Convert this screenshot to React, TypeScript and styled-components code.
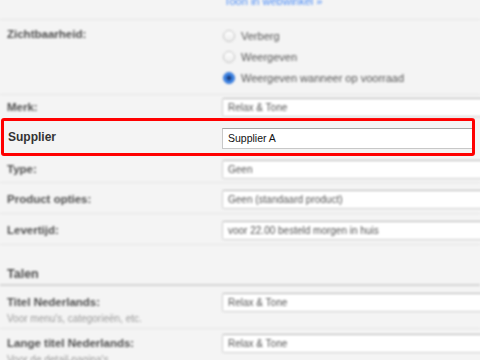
import styled, { createGlobalStyle } from 'styled-components';

const GlobalStyle = createGlobalStyle`
  html, body {
    margin: 0;
    padding: 0;
    background: #f4f4f4;
    overflow: hidden;
  }
  body {
    font-family: "Liberation Sans", Arial, sans-serif;
  }
`;

const Page = styled.main`
  width: 480px;
  height: 360px;
  overflow: hidden;
  background: #f4f4f4;
`;

const Blurred = styled.div`
  filter: blur(0.8px);
`;

const LinkRow = styled.div`
  display: flow-root;
  height: 19px;
  border-bottom: 1px solid #e6e6e6;
  padding-left: 224px;
`;

const ShopLink = styled.a`
  display: block;
  margin-top: -5px;
  font-size: 11px;
  line-height: 13px;
  color: #4d8df6;
  text-decoration: none;
`;

const Row = styled.div<{ $top: number; $bottom: number; $line?: boolean }>`
  display: flex;
  align-items: flex-start;
  padding: ${(p) => p.$top}px 0 ${(p) => p.$bottom}px 7px;
  border-bottom: ${(p) => (p.$line === false ? 'none' : '1px solid #e6e6e6')};
`;

const LabelCol = styled.div`
  width: 215px;
  flex-shrink: 0;
`;

const Label = styled.div`
  font-size: 11.5px;
  font-weight: bold;
  color: #4e4e4e;
  line-height: 19px;
`;

const Hint = styled.div`
  font-size: 10px;
  color: #9a9a9a;
  line-height: 13px;
`;

const Input = styled.div`
  box-sizing: border-box;
  flex: 1;
  min-width: 300px;
  height: 19px;
  background: #fff;
  border: 1px solid #cfcfcf;
  border-top-color: #b5b5b5;
  border-radius: 2px 0 0 2px;
  padding-left: 5px;
  font-size: 10px;
  line-height: 17px;
  color: #555;
  white-space: nowrap;
  margin-right: -40px;
`;

const RadioList = styled.div`
  display: flex;
  flex-direction: column;
  padding-left: 1px;
`;

const RadioItem = styled.label`
  display: flex;
  align-items: center;
  gap: 6px;
  height: 21px;
  font-size: 11px;
  color: #555;
`;

const RadioDot = styled.span<{ $checked?: boolean }>`
  box-sizing: border-box;
  width: 12px;
  height: 12px;
  border-radius: 50%;
  border: 1px solid ${(p) => (p.$checked ? '#2f6fd0' : '#c4c4c4')};
  background: ${(p) =>
    p.$checked
      ? 'radial-gradient(circle, #1c3f80 0 2px, #3d86e8 3px)'
      : 'linear-gradient(#fff, #ececec)'};
`;

const Highlight = styled.div`
  display: flex;
  align-items: center;
  width: 474px;
  height: 38px;
  box-sizing: border-box;
  margin-left: 1px;
  border: 3px solid #ff0000;
  border-radius: 3px;
  padding-left: 4px;
  overflow: hidden;
`;

const HighlightLabel = styled.div`
  width: 214px;
  flex-shrink: 0;
  font-size: 12px;
  font-weight: bold;
  color: #333;
  padding-bottom: 1px;
`;

const HighlightInput = styled.div`
  box-sizing: border-box;
  flex: 1;
  height: 21px;
  margin-top: 3px;
  background: #fff;
  border: 1px solid #c8c8c8;
  border-top-color: #a8a8a8;
  border-right: none;
  padding-left: 5px;
  font-size: 10.5px;
  line-height: 19px;
  color: #111;
`;

const Section = styled.div`
  padding: 22px 0 0 7px;
  border-bottom: 2px solid #d6d6d6;
  height: 17px;
`;

const SectionTitle = styled.h2`
  margin: 0;
  font-size: 12.5px;
  font-weight: bold;
  color: #4e4e4e;
  line-height: 14px;
`;

export default function App() {
  return (
    <Page>
      <GlobalStyle />
      <Blurred>
        <LinkRow>
          <ShopLink href="#">Toon in webwinkel »</ShopLink>
        </LinkRow>
        <Row $top={5} $bottom={6}>
          <LabelCol>
            <Label>Zichtbaarheid:</Label>
          </LabelCol>
          <RadioList>
            <RadioItem>
              <RadioDot />
              Verberg
            </RadioItem>
            <RadioItem>
              <RadioDot />
              Weergeven
            </RadioItem>
            <RadioItem>
              <RadioDot $checked />
              Weergeven wanneer op voorraad
            </RadioItem>
          </RadioList>
        </Row>
        <Row $top={3} $bottom={1} $line={false}>
          <LabelCol>
            <Label>Merk:</Label>
          </LabelCol>
          <Input>Relax &amp; Tone</Input>
        </Row>
      </Blurred>
      <Highlight>
        <HighlightLabel>Supplier</HighlightLabel>
        <HighlightInput>Supplier A</HighlightInput>
      </Highlight>
      <Blurred>
        <Row $top={4} $bottom={3}>
          <LabelCol>
            <Label>Type:</Label>
          </LabelCol>
          <Input>Geen</Input>
        </Row>
        <Row $top={7} $bottom={4}>
          <LabelCol>
            <Label>Product opties:</Label>
          </LabelCol>
          <Input>Geen (standaard product)</Input>
        </Row>
        <Row $top={7} $bottom={4}>
          <LabelCol>
            <Label>Levertijd:</Label>
          </LabelCol>
          <Input>voor 22.00 besteld morgen in huis</Input>
        </Row>
        <Section>
          <SectionTitle>Talen</SectionTitle>
        </Section>
        <Row $top={7} $bottom={3}>
          <LabelCol>
            <Label>Titel Nederlands:</Label>
            <Hint>Voor menu's, categorieën, etc.</Hint>
          </LabelCol>
          <Input>Relax &amp; Tone</Input>
        </Row>
        <Row $top={5} $bottom={4}>
          <LabelCol>
            <Label>Lange titel Nederlands:</Label>
            <Hint>Voor de detail-pagina's</Hint>
          </LabelCol>
          <Input>Relax &amp; Tone</Input>
        </Row>
      </Blurred>
    </Page>
  );
}
